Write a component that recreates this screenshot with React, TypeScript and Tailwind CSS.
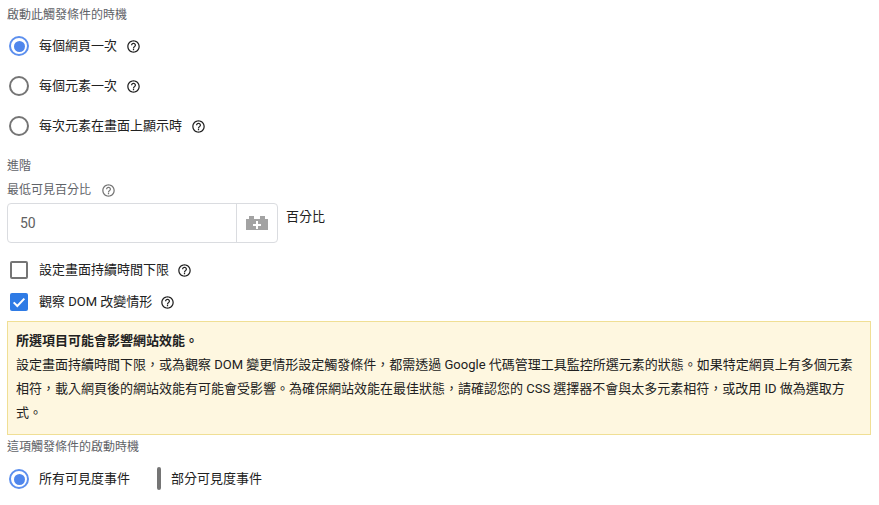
import React from "react";

const font = { fontFamily: '"Roboto", "Noto Sans CJK TC", sans-serif' };

function Help({ className = "text-[#212121]" }: { className?: string }) {
  return (
    <svg viewBox="0 0 24 24" className={`w-[15px] h-[15px] shrink-0 ${className}`} fill="currentColor">
      <path d="M11 18h2v-2h-2v2zm1-16C6.48 2 2 6.48 2 12s4.48 10 10 10 10-4.48 10-10S17.52 2 12 2zm0 18c-4.41 0-8-3.59-8-8s3.59-8 8-8 8 3.59 8 8-3.59 8-8 8zm0-14c-2.21 0-4 1.79-4 4h2c0-1.1.9-2 2-2s2 .9 2 2c0 2-3 1.75-3 5h2c0-2.25 3-2.5 3-5 0-2.21-1.79-4-4-4z" />
    </svg>
  );
}

function Radio({ on }: { on?: boolean }) {
  return on ? (
    <span className="w-5 h-5 rounded-full border-2 border-[#5c8fee] flex items-center justify-center shrink-0">
      <span className="w-[11px] h-[11px] rounded-full bg-[#4f86ec]" />
    </span>
  ) : (
    <span className="w-5 h-5 rounded-full border-2 border-[#757575] shrink-0" />
  );
}

function RadioRow({ on, label, help = true, cls }: { on?: boolean; label: string; help?: boolean; cls: string }) {
  return (
    <div className={`flex items-center ${cls}`}>
      <Radio on={on} />
      <span className="ml-[10px] text-[13px] leading-5 text-[#212121]">{label}</span>
      {help && <span className="ml-[9px]"><Help /></span>}
    </div>
  );
}

export default function App() {
  return (
    <div style={font} className="w-[879px] h-[505px] overflow-hidden bg-white pl-[7px] pr-2 pt-[7px]">
      <div className="text-xs leading-[16px] text-[#5f6368]">啟動此觸發條件的時機</div>
      <div className="pl-[2px]">
        <RadioRow on label="每個網頁一次" cls="mt-[13px]" />
        <RadioRow label="每個元素一次" cls="mt-5" />
        <RadioRow label="每次元素在畫面上顯示時" cls="mt-5" />
      </div>
      <div className="mt-[22px] text-xs leading-[16px] text-[#5f6368]">進階</div>
      <div className="mt-[8px] flex items-center text-xs leading-[16px] text-[#5f6368]">
        最低可見百分比
        <span className="ml-[10px]"><Help className="text-[#757575]" /></span>
      </div>
      <div className="mt-[5px] flex items-start">
        <div className="w-[271px] h-10 border border-[#dadce0] rounded flex items-stretch">
          <div className="flex-1 pl-[12px] flex items-center text-sm text-[#616161]">50</div>
          <div className="w-[41px] border-l border-[#dadce0] flex items-center justify-center">
            <svg viewBox="0 0 24 14" className="w-6 h-[14px]">
              <path fill="#a3a3a3" d="M1 3h3V0h5v3h6V0h5v3h3v11H1z" />
              <path fill="#fff" d="M11 5h2v3h3v2h-3v3h-2v-3H8V8h3z" />
            </svg>
          </div>
        </div>
        <span className="ml-[8px] mt-[4px] text-[13px] leading-5 text-[#212121]">百分比</span>
      </div>
      <div className="mt-[17px] pl-[3px] flex items-center h-[20px]">
        <span className="w-[18px] h-[18px] border-2 border-[#757575] rounded-[2px] shrink-0" />
        <span className="ml-[11px] text-[13px] leading-5 text-[#212121]">設定畫面持續時間下限</span>
        <span className="ml-[8px]"><Help /></span>
      </div>
      <div className="mt-[12px] pl-[3px] flex items-center h-[20px]">
        <span className="w-[18px] h-[18px] bg-[#2f7be5] rounded-[2px] shrink-0 flex items-center justify-center">
          <svg viewBox="0 0 24 24" className="w-4 h-4" fill="none" stroke="#fff" strokeWidth="3">
            <path d="M4 12.5l5.5 5.5L20 7" />
          </svg>
        </span>
        <span className="ml-[11px] text-[13px] leading-5 text-[#212121]">觀察 DOM 改變情形</span>
        <span className="ml-[8px]"><Help /></span>
      </div>
      <div className="mt-[9px] w-[864px] h-[114px] border border-[#f0df95] bg-[#fef7e0] px-2 pt-[7px] text-[12.5px] leading-6 text-[#212121]">
        <div className="font-bold text-[13px]">所選項目可能會影響網站效能。</div>
        <div className="text-[13px]">
          設定畫面持續時間下限，或為觀察 DOM 變更情形設定觸發條件，都需透過 Google 代碼管理工具監控所選元素的狀態。如果特定網頁上有多個元素相符，載入網頁後的網站效能有可能會受影響。為確保網站效能在最佳狀態，請確認您的 CSS 選擇器不會與太多元素相符，或改用 ID 做為選取方式。
        </div>
      </div>
      <div className="mt-[4px] text-xs leading-[16px] text-[#5f6368]">這項觸發條件的啟動時機</div>
      <div className="mt-[12px] pl-[2px] flex items-center">
        <Radio on />
        <span className="ml-[10px] text-[13px] leading-5 text-[#212121]">所有可見度事件</span>
        <span className="ml-[27px]"><Radio /></span>
        <span className="ml-[10px] text-[13px] leading-5 text-[#212121]">部分可見度事件</span>
      </div>
    </div>
  );
}
